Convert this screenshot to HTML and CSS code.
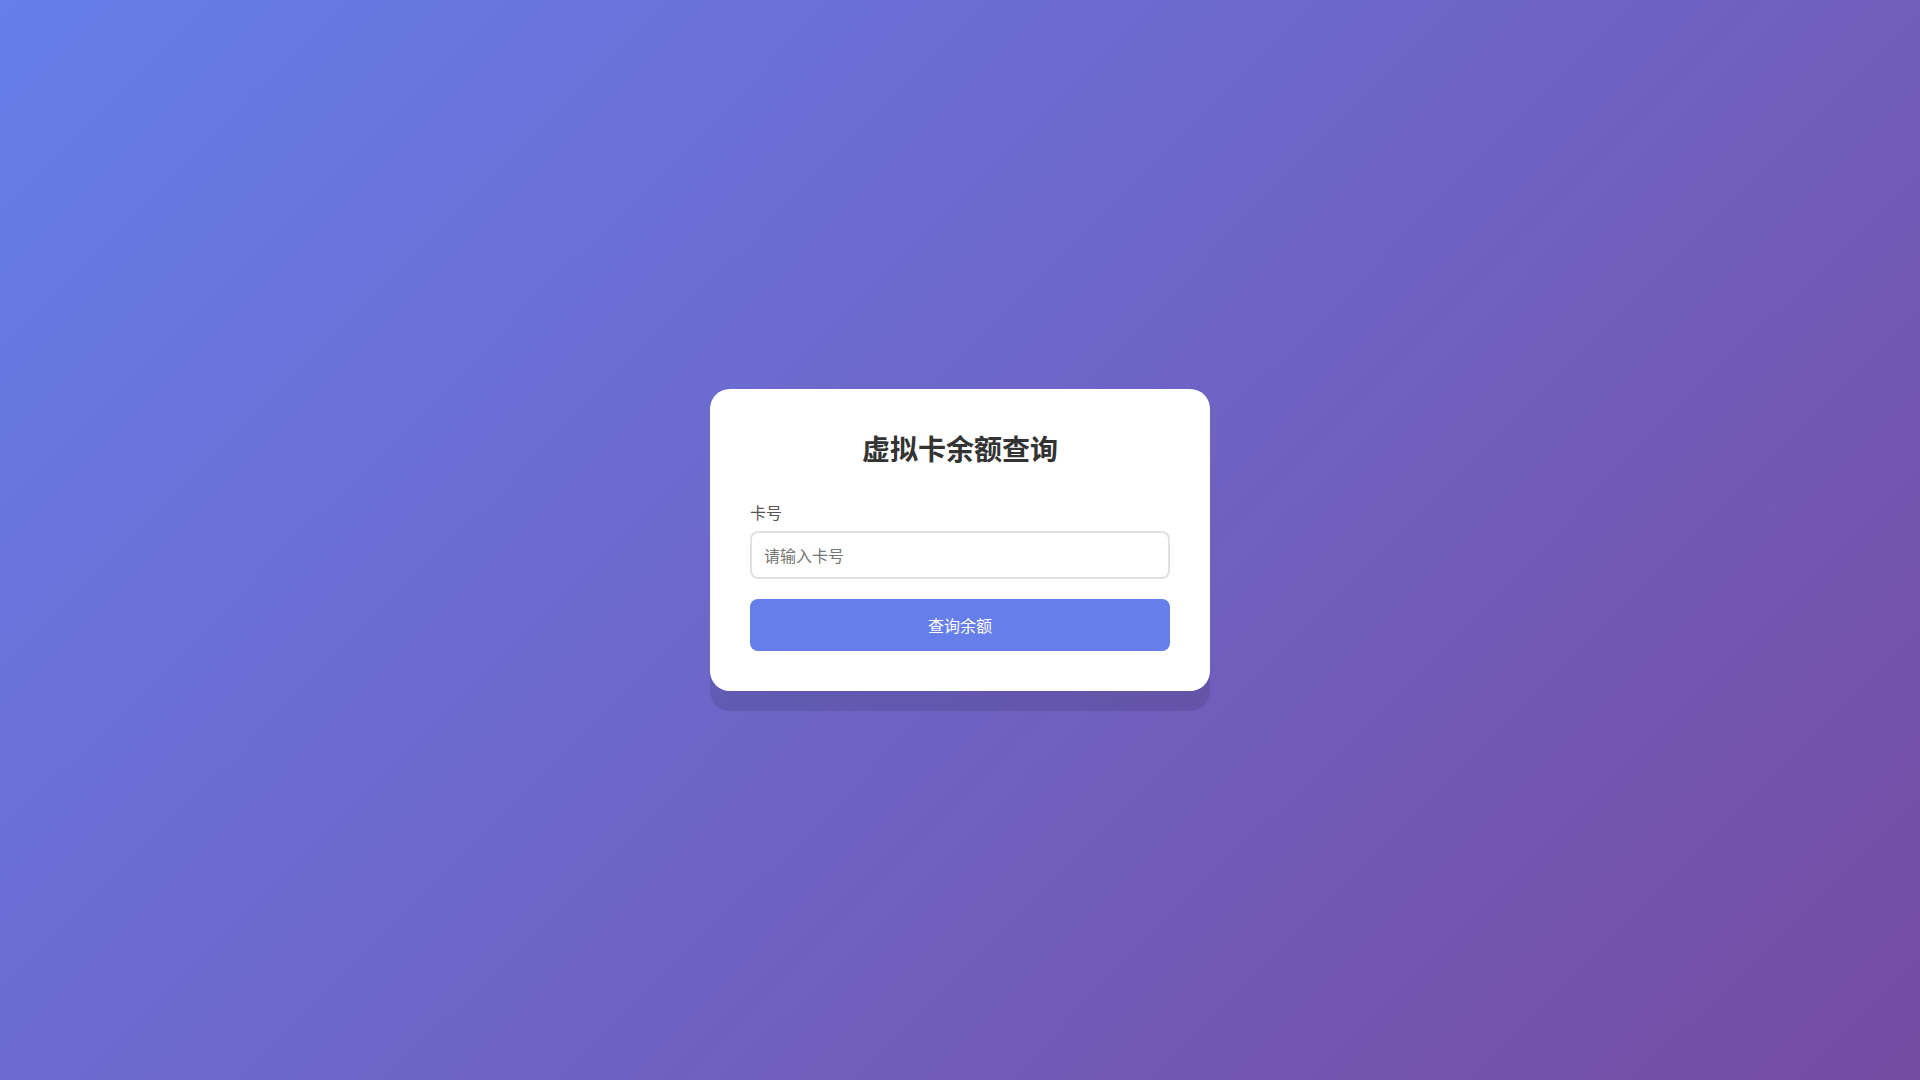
FILE: index.html
```html
<!DOCTYPE html>
<html lang="zh-CN">
<head>
<meta charset="UTF-8">
<title>虚拟卡余额查询</title>
<link rel="stylesheet" href="styles.css">
</head>
<body>
<div class="card">
  <h1 class="title">虚拟卡余额查询</h1>
  <div class="form-group">
    <label class="label" for="card">卡号</label>
    <input class="input" id="card" type="text" placeholder="请输入卡号">
  </div>
  <button class="btn" type="button">查询余额</button>
</div>
</body>
</html>
```
FILE: styles.css
```css
* { box-sizing: border-box; }
html, body { margin: 0; padding: 0; }
body {
  font-family: "Noto Sans CJK SC", "Liberation Sans", sans-serif;
  background: linear-gradient(135deg, #667eea 0%, #764ba2 100%);
  height: 100vh;
  display: flex;
  align-items: center;
  justify-content: center;
}
.card {
  width: 500px;
  background: #fff;
  border-radius: 20px;
  padding: 40px;
  box-shadow: 0 20px 0 rgba(0, 0, 0, 0.1);
}
.title {
  margin: 0 0 34px;
  text-align: center;
  font-size: 28px;
  line-height: 38px;
  font-weight: 700;
  color: #333;
}
.form-group { margin-bottom: 20px; }
.label {
  display: block;
  font-size: 16px;
  line-height: 22px;
  color: #555;
  margin-bottom: 8px;
}
.input {
  display: block;
  width: 100%;
  height: 48px;
  padding: 0 12px;
  border: 2px solid #e1e1e1;
  border-radius: 8px;
  font-family: inherit;
  font-size: 16px;
  color: #333;
  outline: none;
}
.input::placeholder { color: #757575; }
.btn {
  display: block;
  width: 100%;
  height: 52px;
  border: none;
  border-radius: 8px;
  background: #667eea;
  color: #fff;
  font-family: inherit;
  font-size: 16px;
  cursor: pointer;
}
```
